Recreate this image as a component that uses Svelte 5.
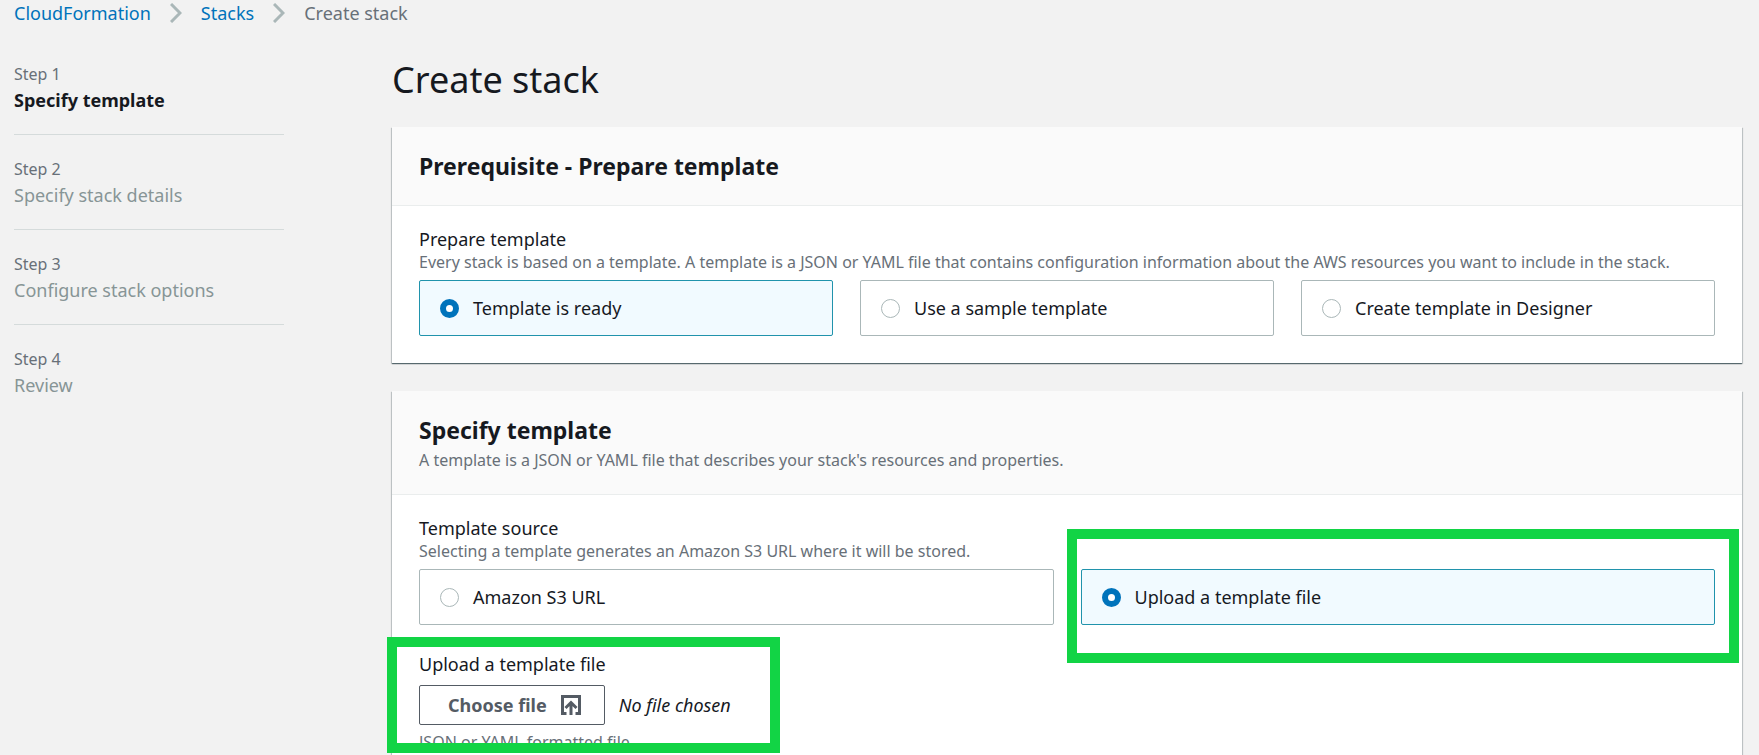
<script>
  const crumbs = [
    { text: 'CloudFormation', href: '#cloudformation' },
    { text: 'Stacks', href: '#stacks' },
  ];
  const steps = ['Specify template', 'Specify stack details', 'Configure stack options', 'Review'];
  const prepareOptions = ['Template is ready', 'Use a sample template', 'Create template in Designer'];
  const sourceOptions = ['Amazon S3 URL', 'Upload a template file'];

  let prepare = $state('Template is ready');
  let source = $state('Upload a template file');
</script>

{#snippet tile(name, option, current, choose)}
  <label class="tile" class:selected={current === option}>
    <input type="radio" {name} value={option} checked={current === option} onchange={() => choose(option)} />
    <span>{option}</span>
  </label>
{/snippet}

<div class="page">
  <nav class="crumbs" aria-label="Breadcrumb">
    {#each crumbs as crumb}
      <a href={crumb.href}>{crumb.text}</a>
      <svg width="12" height="20" viewBox="0 0 12 20" aria-hidden="true">
        <path d="M1 1l9 9-9 9" fill="none" stroke="#aab7b8" stroke-width="3" />
      </svg>
    {/each}
    <span>Create stack</span>
  </nav>

  <div class="layout">
    <ol class="steps">
      {#each steps as step, i}
        <li class:active={i === 0}>
          <small>Step {i + 1}</small>
          <span>{step}</span>
        </li>
      {/each}
    </ol>

    <main>
      <h1>Create stack</h1>

      <section class="card">
        <header><h2>Prerequisite - Prepare template</h2></header>
        <div class="body">
          <fieldset>
            <legend>Prepare template</legend>
            <p class="hint">Every stack is based on a template. A template is a JSON or YAML file that contains configuration information about the AWS resources you want to include in the stack.</p>
            <div class="tiles">
              {#each prepareOptions as option}
                {@render tile('prepare', option, prepare, (v) => (prepare = v))}
              {/each}
            </div>
          </fieldset>
        </div>
      </section>

      <section class="card">
        <header>
          <h2>Specify template</h2>
          <p class="hint">A template is a JSON or YAML file that describes your stack's resources and properties.</p>
        </header>
        <div class="body">
          <fieldset>
            <legend>Template source</legend>
            <p class="hint">Selecting a template generates an Amazon S3 URL where it will be stored.</p>
            <div class="tiles">
              {#each sourceOptions as option, i}
                <div class="slot">
                  {@render tile('source', option, source, (v) => (source = v))}
                  {#if i === 1}<div class="marker marker-source"></div>{/if}
                </div>
              {/each}
            </div>
          </fieldset>

          <div class="upload">
            <div id="upload-label">Upload a template file</div>
            <div class="picker">
              <button type="button" aria-describedby="upload-label">
                Choose file
                <svg width="20" height="20" viewBox="0 0 20 20" fill="none" stroke="#545b64" stroke-width="3" aria-hidden="true">
                  <path d="M5.5 18.5h-4v-17h17v17h-4" />
                  <path d="M10 20V7.500M4.500 13L10 7.500l5.500 5.500" />
                </svg>
              </button>
              <em>No file chosen</em>
            </div>
            <p class="hint">JSON or YAML formatted file</p>
            <div class="marker marker-upload"></div>
          </div>
        </div>
      </section>
    </main>
  </div>
</div>

<style>
  :global(body) {
    margin: 0;
    background: #f2f2f2;
  }
  .page {
    box-sizing: border-box;
    height: 100vh;
    overflow: hidden;
    padding: 0 17px 0 14px;
    font-family: 'Noto Sans', 'Open Sans', sans-serif;
    font-size: 18px;
    line-height: 26px;
    color: #16191f;
  }
  .crumbs {
    display: flex;
    align-items: center;
    gap: 19px;
    color: #687078;
  }
  .crumbs a {
    color: #0073bb;
    text-decoration: none;
  }
  .layout {
    display: grid;
    grid-template-columns: 270px minmax(0, 1fr);
    column-gap: 108px;
  }
  .steps {
    list-style: none;
    margin: 0;
    padding: 35px 0 0;
  }
  .steps li {
    display: flex;
    flex-direction: column;
    margin-bottom: 21px;
    padding-bottom: 21px;
    border-bottom: 1px solid #d5dbdb;
    color: #879596;
  }
  .steps li:last-child {
    border-bottom: 0;
  }
  .steps small {
    font-size: 16px;
    color: #687078;
  }
  .steps .active span {
    font-weight: 700;
    color: #16191f;
  }
  h1,
  h2,
  p {
    margin: 0;
  }
  h1 {
    padding: 30px 0 23px;
    font-size: 36px;
    line-height: 48px;
    font-weight: 400;
  }
  h2 {
    font-size: 23px;
    line-height: 30px;
    font-weight: 700;
  }
  .card {
    margin-bottom: 28px;
    background: #fff;
    box-shadow:
      0 1px 1px 0 rgba(0, 28, 36, 0.5),
      1px 1px 1px 0 rgba(0, 28, 36, 0.15),
      -1px 1px 1px 0 rgba(0, 28, 36, 0.15);
  }
  .card header {
    padding: 24px 27px;
    border-bottom: 1px solid #eaeded;
    background: #fafafa;
  }
  header .hint {
    margin-top: 5px;
  }
  .body {
    padding: 20px 27px 27px;
  }
  fieldset {
    min-width: 0;
    margin: 0;
    padding: 0;
    border: 0;
  }
  legend {
    padding: 0;
  }
  .hint {
    font-size: 16px;
    line-height: 20px;
    color: #687078;
  }
  .tiles {
    display: grid;
    grid-auto-flow: column;
    grid-auto-columns: minmax(0, 1fr);
    gap: 27px;
    margin-top: 8px;
  }
  .slot {
    position: relative;
  }
  .tile {
    display: flex;
    align-items: center;
    gap: 14px;
    padding: 14px 20px;
    border: 1px solid #aab7b8;
    border-radius: 2px;
    background: #fff;
  }
  .tile.selected {
    border-color: #2093ac;
    background: #f1faff;
  }
  .tile input {
    appearance: none;
    box-sizing: border-box;
    width: 19px;
    height: 19px;
    margin: 0;
    border: 1px solid #aab7b8;
    border-radius: 50%;
    background: #fff;
  }
  .tile input:checked {
    border: 6px solid #0073bb;
  }
  .upload {
    position: relative;
    margin-top: 26px;
  }
  .picker {
    display: flex;
    align-items: center;
    gap: 14px;
    margin: 8px 0 7px;
  }
  button {
    display: flex;
    align-items: center;
    gap: 14px;
    padding: 6px 23px 6px 28px;
    border: 1px solid #545b64;
    border-radius: 2px;
    background: #fff;
    font: inherit;
    font-weight: 700;
    color: #545b64;
  }
  .marker {
    position: absolute;
    border: 10px solid #12d445;
    pointer-events: none;
  }
  .marker-source {
    inset: -40px -24px -38px -14px;
  }
  .marker-upload {
    top: -14px;
    left: -32px;
    width: 373px;
    height: 96px;
  }
</style>
